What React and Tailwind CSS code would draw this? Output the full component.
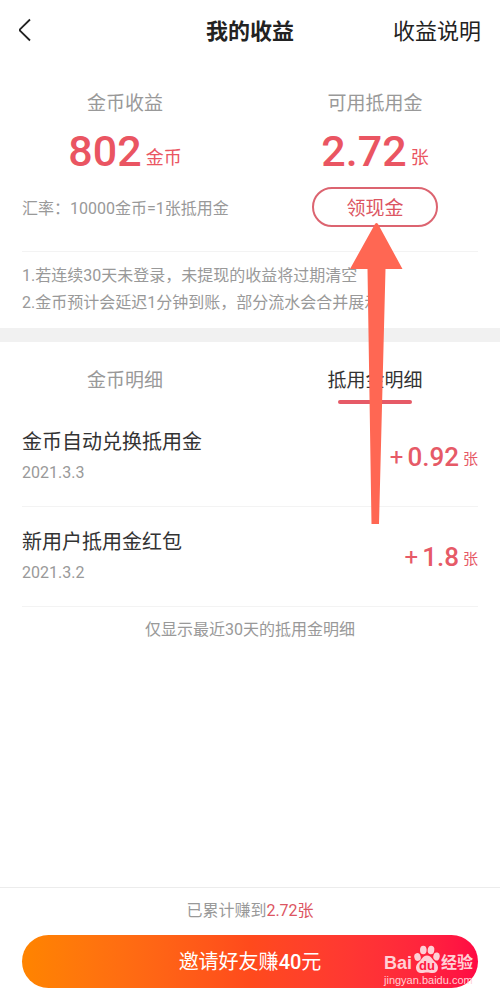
import { clsx } from "clsx";

const RECORDS = [
  { title: "金币自动兑换抵用金", date: "2021.3.3", amount: "0.92" },
  { title: "新用户抵用金红包", date: "2021.3.2", amount: "1.8" },
];

const NOTES = [
  "1.若连续30天未登录，未提现的收益将过期清空",
  "2.金币预计会延迟1分钟到账，部分流水会合并展示",
];

export default function App() {
  return (
    <div className="min-h-screen flex flex-col bg-white text-[#2b2b2b] font-[Roboto,'Noto_Sans_CJK_SC',sans-serif]">
      <Header />
      <main>
        <Summary />
        <Tabs />
        <RecordList />
      </main>
      <Footer />
    </div>
  );
}

function Header() {
  return (
    <header className="h-16 px-[19px] grid grid-cols-[1fr_auto_1fr] items-center">
      <button type="button" aria-label="返回" className="justify-self-start pb-1">
        <svg width="12" height="24" viewBox="0 0 12 24" fill="none">
          <path d="M11 1.500 1.200 11Q0.400 12 1.200 13L11 22.500" stroke="#222" strokeWidth="1.8" />
        </svg>
      </button>
      <h1 className="text-[22px] leading-8 font-bold text-[#222]">我的收益</h1>
      <a href="#help" className="justify-self-end text-[22px] leading-8 text-[#222]">
        收益说明
      </a>
    </header>
  );
}

function Summary() {
  return (
    <section className="border-b-[14px] border-[#f1f1f1]">
      <div className="grid grid-cols-2 pt-[26px]">
        <Balance label="金币收益" value="802" unit="金币" />
        <Balance label="可用抵用金" value="2.72" unit="张" />
        <p className="pl-[22px] pt-1 self-center text-base text-[#999] whitespace-nowrap">
          汇率：10000金币=1张抵用金
        </p>
        <div className="relative flex justify-center">
          <button
            type="button"
            className="w-[126px] h-10 pt-[3px] rounded-full border-2 border-[#dc6470] text-[19px] leading-7 text-[#dc5562]"
          >
            领现金
          </button>
          <Arrow />
        </div>
      </div>
      <div className="mx-[22px] mt-6 pt-[10px] pb-3 border-t border-[#f3f3f3] text-base leading-[27px] text-[#999]">
        {NOTES.map((note) => (
          <p key={note}>{note}</p>
        ))}
      </div>
    </section>
  );
}

function Balance({ label, value, unit }) {
  return (
    <div className="flex flex-col items-center h-[97px]">
      <span className="text-[19px] leading-7 text-[#999]">{label}</span>
      <span className="mt-[7px] flex items-end gap-1 text-[#ea5562]">
        <strong className="text-[43px] leading-[52px] font-medium">{value}</strong>
        <span className="text-lg leading-[38px]">{unit}</span>
      </span>
    </div>
  );
}

function Arrow() {
  return (
    <svg
      className="absolute z-10 left-1/2 top-9 ml-[2px] -translate-x-1/2 pointer-events-none"
      width="54"
      height="302"
      viewBox="0 0 54 302"
      aria-hidden="true"
    >
      <path d="M25 1Q26.500-1 28 1L52.500 46H35.500L29 301H21.500L17.500 46H0Z" fill="#ff6753" />
    </svg>
  );
}

function Tabs() {
  return (
    <div role="tablist" className="grid grid-cols-2 pt-[25px]">
      <Tab label="金币明细" />
      <Tab label="抵用金明细" active />
    </div>
  );
}

function Tab({ label, active }) {
  return (
    <button
      type="button"
      role="tab"
      aria-selected={Boolean(active)}
      className={clsx(
        "flex flex-col items-center text-[19px] leading-7",
        active ? "text-[#333]" : "text-[#999]"
      )}
    >
      {label}
      <span className={clsx("mt-[5px] w-[74px] h-1 rounded-full", active && "bg-[#e65a67]")} />
    </button>
  );
}

function RecordList() {
  return (
    <section className="pt-[3px]">
      <ul className="px-[22px]">
        {RECORDS.map((r) => (
          <li
            key={r.date}
            className="h-[100px] flex items-center justify-between border-b border-[#f3f3f3]"
          >
            <div>
              <h2 className="text-xl leading-8 text-[#333]">{r.title}</h2>
              <time className="block text-base leading-[30px] text-[#999]">{r.date}</time>
            </div>
            <Amount value={r.amount} />
          </li>
        ))}
      </ul>
      <p className="pt-[11px] text-center text-base text-[#999]">仅显示最近30天的抵用金明细</p>
    </section>
  );
}

function Amount({ value }) {
  return (
    <span className="flex items-end gap-1 text-[#e65a67]">
      <span className="text-2xl leading-8">+</span>
      <strong className="text-[26px] leading-8 font-medium">{value}</strong>
      <span className="text-[15px] leading-7">张</span>
    </span>
  );
}

function Footer() {
  return (
    <footer className="relative mt-auto px-[22px] pt-[11px] pb-2 border-t border-[#ececec] text-center">
      <p className="text-base text-[#999]">
        已累计赚到<span className="text-[#dc5562]">2.72张</span>
      </p>
      <button
        type="button"
        className="mt-3 w-full h-[53px] rounded-full bg-linear-to-r from-[#ff8400] via-[#ff4a1c] to-[#ff0844] text-xl text-white"
      >
        邀请好友赚<span className="font-medium">40</span>元
      </button>
      <Watermark />
    </footer>
  );
}

function Watermark() {
  return (
    <div className="absolute right-[26px] bottom-[9px] w-[90px] text-[#ffd0d6] pointer-events-none">
      <div className="flex items-end">
        <span className="w-7 text-left text-lg leading-5 font-bold font-['Liberation_Sans',sans-serif]">Bai</span>
        <svg className="shrink-0 ml-[2px]" width="26" height="28" viewBox="0 0 26 28" fill="currentColor">
          <ellipse cx="3.500" cy="12" rx="3.200" ry="4" transform="rotate(-15 3.5 12)" />
          <ellipse cx="9.300" cy="5" rx="3.300" ry="4.300" />
          <ellipse cx="17" cy="5" rx="3.300" ry="4.300" transform="rotate(8 17 5)" />
          <ellipse cx="22.500" cy="11.500" rx="3.200" ry="4" transform="rotate(12 22.5 11.5)" />
          <path d="M13 10.500C17.500 10.500 18 14.500 21.500 17.500C26 21.500 24 28 19 28C16 28 15 27.500 13 27.500S10 28 7 28C2 28 0 21.500 4.500 17.500C8 14.500 8.500 10.500 13 10.500Z" />
          <text x="13" y="25" textAnchor="middle" fontSize="13" fontWeight="700" fontFamily="Liberation Sans" fill="#ff1740">
            du
          </text>
        </svg>
        <span className="ml-px text-[16px] leading-5 font-bold whitespace-nowrap">经验</span>
      </div>
      <div className="text-[11px] leading-[14px] text-left font-['Liberation_Sans',sans-serif]">jingyan.baidu.com</div>
    </div>
  );
}
